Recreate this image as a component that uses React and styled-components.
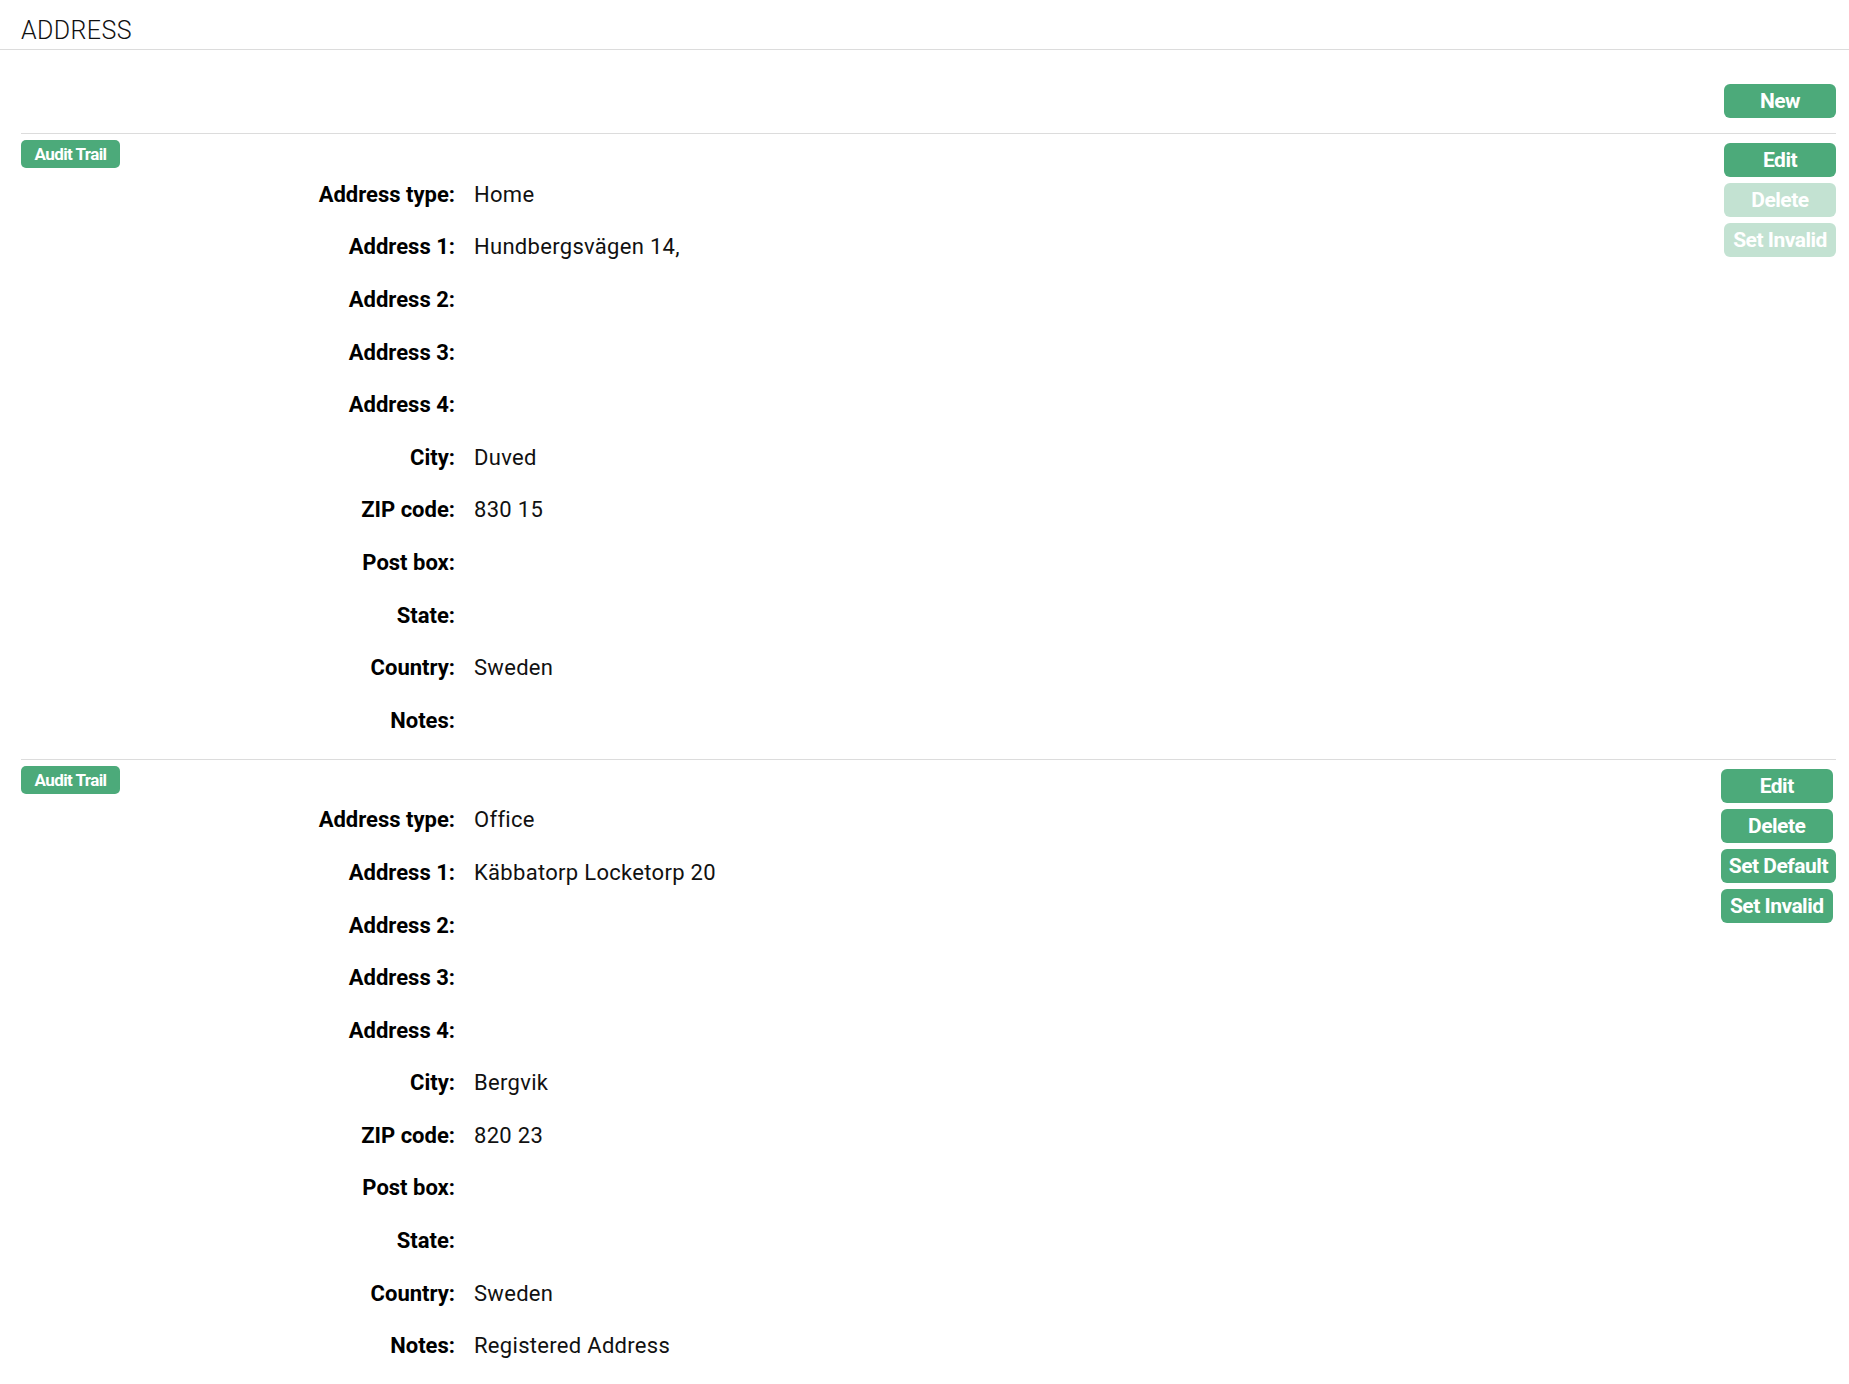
import React from "react";
import styled, { createGlobalStyle } from "styled-components";

const GlobalStyle = createGlobalStyle`
  body {
    margin: 0;
    background: #fff;
    font-family: Roboto, "Open Sans", Arial, sans-serif;
    color: #111;
  }
`;

const Page = styled.div`
  width: 100%;
`;

const Header = styled.div`
  height: 50px;
  border-bottom: 1px solid #dcdcdc;
  padding-left: 21px;
  box-sizing: border-box;
`;

const Title = styled.h1`
  margin: 0;
  padding-top: 16px;
  font-size: 25px;
  line-height: 30px;
  font-weight: 300;
  letter-spacing: 0.4px;
  color: #111;
  text-transform: uppercase;
`;

const Content = styled.div`
  padding: 0 13px 0 21px;
`;

const Toolbar = styled.div`
  display: flex;
  justify-content: flex-end;
  padding: 34px 0 15px;
`;

const Button = styled.button`
  min-width: 112px;
  height: 34px;
  padding: 0 8px;
  border: none;
  border-radius: 6px;
  background: ${(p) => (p.disabled ? "#c3e2d2" : "#4caa7a")};
  color: #fff;
  font-family: Roboto, "Open Sans", Arial, sans-serif;
  font-size: 21px;
  font-weight: 700;
  letter-spacing: -0.5px;
  cursor: ${(p) => (p.disabled ? "default" : "pointer")};
  white-space: nowrap;
`;

const SmallButton = styled(Button)`
  min-width: 99px;
  height: 28px;
  border-radius: 5px;
  font-size: 17px;
  letter-spacing: -0.6px;
  padding: 0 6px;
`;

const Section = styled.section`
  display: flex;
  border-top: 1px solid #dcdcdc;
`;

const Main = styled.div`
  flex: 1;
  padding: 6px 0 12px;
`;

const Fields = styled.dl`
  display: grid;
  grid-template-columns: 434px 1fr;
  grid-auto-rows: 52.6px;
  column-gap: 19px;
  margin: 0;
`;

const Label = styled.dt`
  display: flex;
  align-items: center;
  justify-content: flex-end;
  font-size: 22px;
  font-weight: 700;
  color: #000;
`;

const Value = styled.dd`
  display: flex;
  align-items: center;
  margin: 0;
  font-size: 22px;
  font-weight: 400;
  letter-spacing: 0.3px;
  color: #111;
`;

const Actions = styled.div`
  display: flex;
  flex-direction: column;
  align-items: flex-start;
  flex-shrink: 0;
  gap: 6px;
  padding-top: 9px;
`;

const fieldNames = [
  ["type", "Address type:"],
  ["a1", "Address 1:"],
  ["a2", "Address 2:"],
  ["a3", "Address 3:"],
  ["a4", "Address 4:"],
  ["city", "City:"],
  ["zip", "ZIP code:"],
  ["box", "Post box:"],
  ["state", "State:"],
  ["country", "Country:"],
  ["notes", "Notes:"],
];

const addresses = [
  {
    id: 1,
    isDefault: true,
    type: "Home",
    a1: "Hundbergsvägen 14,",
    city: "Duved",
    zip: "830 15",
    country: "Sweden",
  },
  {
    id: 2,
    isDefault: false,
    type: "Office",
    a1: "Käbbatorp Locketorp 20",
    city: "Bergvik",
    zip: "820 23",
    country: "Sweden",
    notes: "Registered Address",
  },
];

function AddressCard({ address }) {
  return (
    <Section>
      <Main>
        <SmallButton>Audit Trail</SmallButton>
        <Fields>
          {fieldNames.map(([key, label]) => (
            <React.Fragment key={key}>
              <Label>{label}</Label>
              <Value>{address[key] || ""}</Value>
            </React.Fragment>
          ))}
        </Fields>
      </Main>
      <Actions>
        <Button>Edit</Button>
        <Button disabled={address.isDefault}>Delete</Button>
        {!address.isDefault && <Button>Set Default</Button>}
        <Button disabled={address.isDefault}>Set Invalid</Button>
      </Actions>
    </Section>
  );
}

export default function App() {
  return (
    <Page>
      <GlobalStyle />
      <Header>
        <Title>Address</Title>
      </Header>
      <Content>
        <Toolbar>
          <Button>New</Button>
        </Toolbar>
        {addresses.map((a) => (
          <AddressCard key={a.id} address={a} />
        ))}
      </Content>
    </Page>
  );
}
